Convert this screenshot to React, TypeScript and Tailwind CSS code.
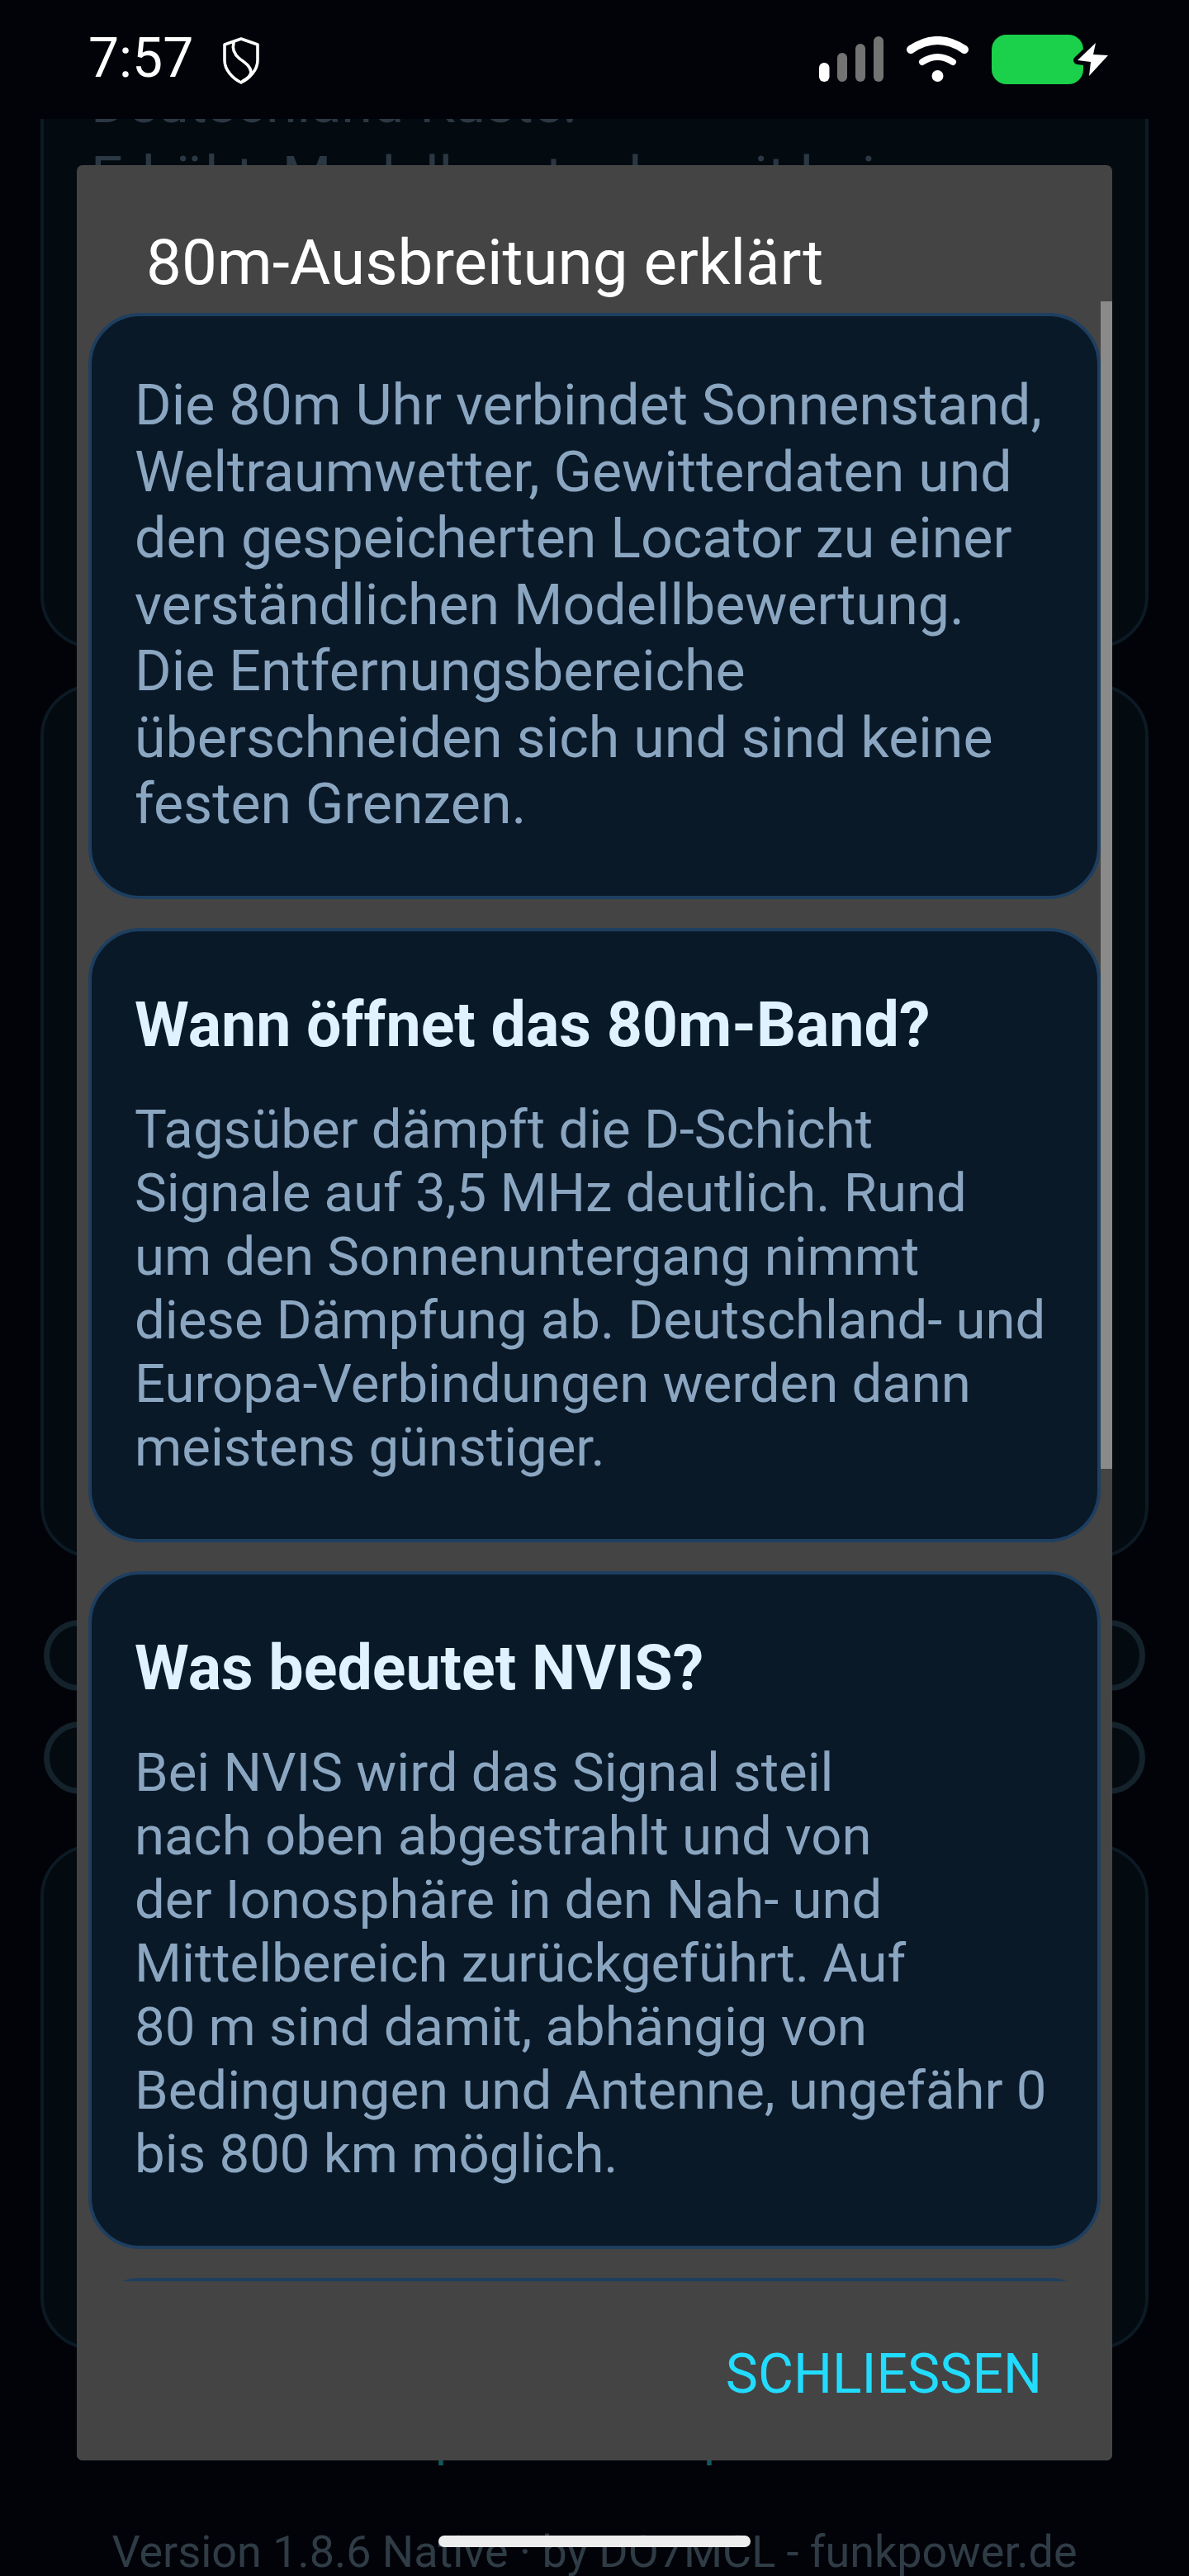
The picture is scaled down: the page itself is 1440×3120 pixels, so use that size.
import React from "react";

const font = { fontFamily: "Roboto, sans-serif" };

function Shield() {
  return (
    <svg width="46" height="57" viewBox="0 0 46 57" fill="none" stroke="#fff" strokeWidth="3.6" strokeLinejoin="round" strokeLinecap="round">
      <path d="M23 2 L43 9 V28 C43 40 33 50 23 55 C13 50 3 40 3 28 V9 Z" />
      <path d="M14 7 C12 14 14 20 21 26 C28 31 34 35 35 42 C35 46 31 50 25 53" />
    </svg>
  );
}

function Signal() {
  return (
    <svg width="78" height="55" viewBox="0 0 78 55">
      <rect x="0" y="32" width="12.5" height="23" rx="6" fill="#fff" />
      <rect x="22" y="20" width="12" height="35" rx="6" fill="#737373" />
      <rect x="44" y="9" width="12" height="46" rx="6" fill="#737373" />
      <rect x="66" y="0" width="12" height="55" rx="6" fill="#737373" />
    </svg>
  );
}

function Wifi() {
  return (
    <svg width="76" height="56" viewBox="0 0 76 56" fill="none" stroke="#fff" strokeLinecap="round">
      <path d="M5 16 Q37.5 -6 70 16" strokeWidth="10" />
      <path d="M19 31 Q37.5 19 56 31" strokeWidth="8" />
      <circle cx="37.5" cy="48" r="7" fill="#fff" stroke="none" />
    </svg>
  );
}

function Battery() {
  const bolt = "M126 10 L104 31 L120 33 L118 50 L141 25 L123 24 Z";
  return (
    <svg width="142" height="60" viewBox="0 0 142 60">
      <rect x="0" y="0" width="111" height="60" rx="18" fill="#1bd04a" />
      <path d={bolt} fill="#020308" stroke="#020308" strokeWidth="10" strokeLinejoin="round" />
      <path d={bolt} fill="#fff" />
    </svg>
  );
}

function Card({ title, lines, className }: { title?: string; lines: string[]; className: string }) {
  return (
    <section className={`rounded-[63px] border-4 border-[#1e3f60] bg-[#0a1928] px-[52px] ${className}`}>
      {title && <h3 className="mb-[46px] text-[75.3px] leading-[84px] font-bold text-[#e0f2ff]">{title}</h3>}
      <p className={title ? "text-[65.3px] leading-[77px] text-[#8ba6c1]" : "text-[68.1px] leading-[80.5px] text-[#8ba6c1]"}>
        {lines.map((l, i) => (
          <span key={i} className="block whitespace-nowrap">{l}</span>
        ))}
      </p>
    </section>
  );
}

export default function App() {
  return (
    <div className="relative h-[3120px] w-[1440px] overflow-hidden bg-[#020308]" style={font}>
      <header className="relative z-10 flex h-[144px] items-start bg-[#020308] pl-[107px] pr-[97px]">
        <span className="mt-[32px] text-[66px] leading-[78px] text-white">7:57</span>
        <span className="ml-[35px] mt-[45px]"><Shield /></span>
        <div className="ml-auto mt-[42px] flex items-start">
          <span className="mt-[2px]"><Signal /></span>
          <span className="ml-[28px] mt-[2px]"><Wifi /></span>
          <span className="ml-[27px]"><Battery /></span>
        </div>
      </header>

      <main className="flex flex-col px-[49px] text-[#2b3843]">
        <div className="-mt-[400px] h-[1041px] rounded-[63px] border-4 border-[#0b1a24] bg-[#030a10] pl-[57px] pt-[337px]">
          <p className="text-[68.25px] leading-[80px] whitespace-nowrap">Deutschland-Küste:</p>
          <p className="mt-[10px] text-[68.25px] leading-[80px] whitespace-nowrap">Erhöht: Modellwert oder mit bei</p>
        </div>
        <div className="mt-[44px] h-[1058px] rounded-[63px] border-4 border-[#0b1a24] bg-[#030a10]" />
        <div className="mx-[4px] mt-[75px] h-[86px] rounded-full border-[7px] border-[#14222c] bg-[#030a10]" />
        <div className="mx-[4px] mt-[37px] h-[88px] rounded-full border-[7px] border-[#14222c] bg-[#030a10]" />
        <div className="mt-[61px] h-[612px] rounded-[63px] border-4 border-[#0b1a24] bg-[#030a10]" />
        <p className="mt-[74px] pl-[408px] text-[61px] leading-[66px] whitespace-nowrap text-[#0e5a60]">Impressum · Open Source</p>
        <p className="mt-[74px] text-center text-[53.9px] leading-[62px] whitespace-nowrap text-[#2f3c46]">Version 1.8.6 Native · by DO7MCL - funkpower.de</p>
      </main>

      <div className="absolute left-[93px] top-[200px] z-20 flex h-[2780px] w-[1254px] flex-col overflow-hidden rounded-[7px] bg-[#444444]">
        <h2 className="h-[165px] shrink-0 pl-[84px] pt-[73px] text-[76.3px] leading-[90px] text-white">80m-Ausbreitung erklärt</h2>
        <div className="relative h-[2398px] shrink-0 overflow-hidden pl-[14px] pr-[14px] pt-[14px]">
          <div className="absolute right-0 top-0 h-[1414px] w-[14px] bg-[#8a8a8a]" />
          <Card
            className="h-[710px] pt-[68px]"
            lines={[
              "Die 80m Uhr verbindet Sonnenstand,",
              "Weltraumwetter, Gewitterdaten und",
              "den gespeicherten Locator zu einer",
              "verständlichen Modellbewertung.",
              "Die Entfernungsbereiche",
              "überschneiden sich und sind keine",
              "festen Grenzen.",
            ]}
          />
          <Card
            className="mt-[35px] h-[744px] pt-[71px]"
            title="Wann öffnet das 80m-Band?"
            lines={[
              "Tagsüber dämpft die D-Schicht",
              "Signale auf 3,5 MHz deutlich. Rund",
              "um den Sonnenuntergang nimmt",
              "diese Dämpfung ab. Deutschland- und",
              "Europa-Verbindungen werden dann",
              "meistens günstiger.",
            ]}
          />
          <Card
            className="mt-[35px] h-[821px] pt-[71px]"
            title="Was bedeutet NVIS?"
            lines={[
              "Bei NVIS wird das Signal steil",
              "nach oben abgestrahlt und von",
              "der Ionosphäre in den Nah- und",
              "Mittelbereich zurückgeführt. Auf",
              "80 m sind damit, abhängig von",
              "Bedingungen und Antenne, ungefähr 0",
              "bis 800 km möglich.",
            ]}
          />
          <div className="mt-[35px] h-[200px] rounded-[63px] border-4 border-[#1e3f60] bg-[#0a1928]" />
        </div>
        <div className="flex flex-1 items-start justify-end bg-[#444444] pr-[85px] pt-[76px]">
          <span className="text-[66px] leading-[74px] text-[#22dcff]">SCHLIESSEN</span>
        </div>
      </div>

      <div className="absolute left-[531px] top-[3071px] z-30 h-[14px] w-[378px] rounded-full bg-[#ededed]" />
    </div>
  );
}
